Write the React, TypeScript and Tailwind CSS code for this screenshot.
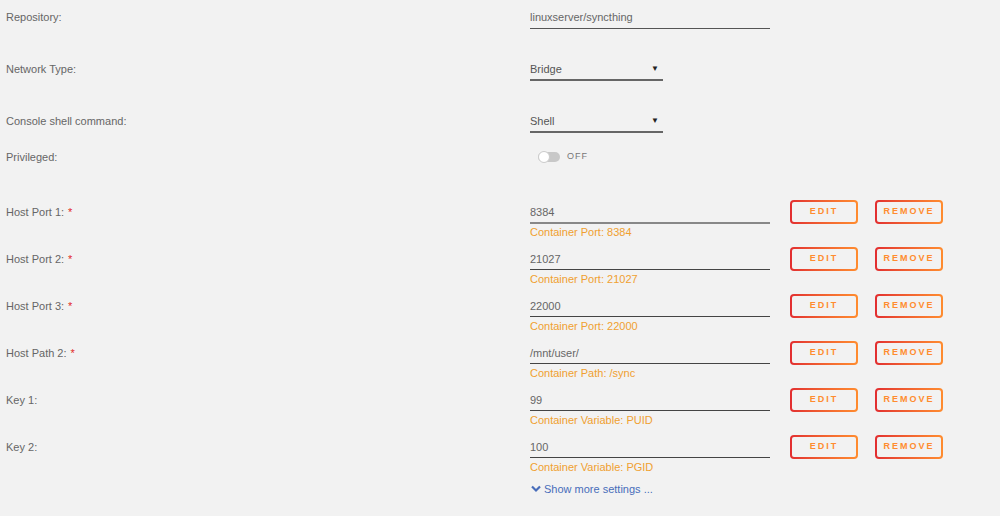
import React from "react";

const font = { fontFamily: '"Liberation Sans", Arial, sans-serif' };

function Btn({ label }: { label: string }) {
  return (
    <div className="rounded-[4px] bg-gradient-to-r from-[#e22d30] to-[#ff8c2f] p-[2px]">
      <div className="flex h-[20px] w-[64px] items-center justify-center rounded-[2px] bg-[#f2f2f2] text-[9px] font-bold tracking-[2px] text-[#ff8c2f]">
        {label}
      </div>
    </div>
  );
}

function Label({ text, req }: { text: string; req?: boolean }) {
  return (
    <div className="w-[530px] shrink-0 pl-[6px] leading-[20px]">
      {text}
      {req && <span className="ml-[4px] text-[#e22828]">*</span>}
    </div>
  );
}

function MapRow({
  label,
  value,
  sub,
  h = "h-[47px]",
  first,
}: {
  label: string;
  value: string;
  sub: string;
  h?: string;
  first?: boolean;
}) {
  return (
    <div className={`flex ${h} items-start`}>
      <Label text={label} req={label.startsWith("Host")} />
      <div className="flex flex-col">
        <div
          className={
            first
              ? "w-[240px] border-b-2 border-[#888] leading-[20px]"
              : "w-[240px] border-b border-[#444] leading-[20px]"
          }
        >
          {value}
        </div>
        <div className={first ? "leading-[16px] text-[#f0a030]" : "mt-[1px] leading-[16px] text-[#f0a030]"}>
          {sub}
        </div>
      </div>
      <div className="ml-[20px] mt-[-2px] flex gap-[17px]">
        <Btn label="EDIT" />
        <Btn label="REMOVE" />
      </div>
    </div>
  );
}

export default function App() {
  return (
    <div className="h-[516px] w-[1000px] bg-[#f2f2f2] text-[11px] text-[#666]" style={font}>
      <div className="flex h-[52px] items-start pt-[7px]">
        <Label text="Repository:" />
        <div className="w-[240px] border-b border-[#555] leading-[21px]">linuxserver/syncthing</div>
      </div>
      <div className="flex h-[52px] items-start pt-[7px]">
        <Label text="Network Type:" />
        <div className="flex w-[133px] items-center justify-between border-b-2 border-[#666] leading-[20px] text-[#555]">
          <span>Bridge</span>
          <span className="mr-[4px] text-[8px] text-[#222]">▼</span>
        </div>
      </div>
      <div className="flex h-[36px] items-start pt-[7px]">
        <Label text="Console shell command:" />
        <div className="flex w-[133px] items-center justify-between border-b-2 border-[#666] leading-[20px] text-[#555]">
          <span>Shell</span>
          <span className="mr-[4px] text-[8px] text-[#222]">▼</span>
        </div>
      </div>
      <div className="flex h-[62px] items-start pt-[7px]">
        <Label text="Privileged:" />
        <div className="flex h-[20px] items-center pl-[8px]">
          <div className="relative h-[10px] w-[22px] rounded-full bg-[#c8c8c8]">
            <div className="absolute left-0 top-[-1px] h-[12px] w-[12px] rounded-full border border-[#ccc] bg-white" />
          </div>
          <span className="ml-[7px] text-[9px] tracking-[1px] text-[#777]">OFF</span>
        </div>
      </div>
      <MapRow label="Host Port 1:" value="8384" sub="Container Port: 8384" first />
      <MapRow label="Host Port 2:" value="21027" sub="Container Port: 21027" />
      <MapRow label="Host Port 3:" value="22000" sub="Container Port: 22000" />
      <MapRow label="Host Path 2:" value="/mnt/user/" sub="Container Path: /sync" />
      <MapRow label="Key 1:" value="99" sub="Container Variable: PUID" />
      <MapRow label="Key 2:" value="100" sub="Container Variable: PGID" h="h-[44px]" />
      <div className="flex items-center pl-[531px] leading-[16px] text-[#486dba]">
        <svg width="10" height="8" viewBox="0 0 10 8" className="mr-[3px]">
          <path d="M1 1.5 L5 5.5 L9 1.5" stroke="#486dba" strokeWidth="2.2" fill="none" />
        </svg>
        <span>Show more settings ...</span>
      </div>
    </div>
  );
}
